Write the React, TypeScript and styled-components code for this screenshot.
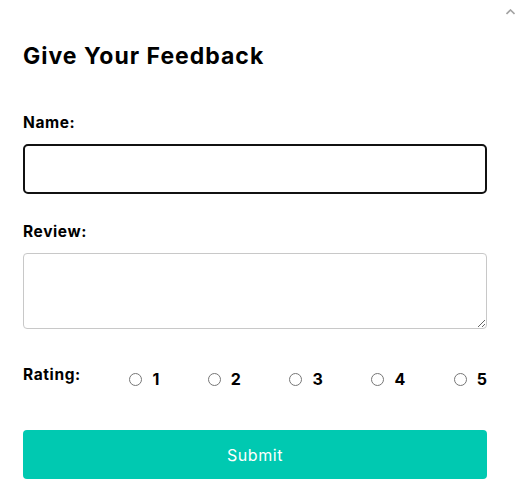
import React from 'react';
import styled, { createGlobalStyle } from 'styled-components';

const GlobalStyle = createGlobalStyle`
  html, body {
    margin: 0;
    padding: 0;
    background: #ffffff;
  }
  body {
    font-family: Inter, 'Noto Sans', sans-serif;
    color: #000000;
  }
`;

const Page = styled.div`
  position: relative;
  width: 525px;
  height: 502px;
  overflow: hidden;
`;

const ScrollArrow = styled.svg`
  position: absolute;
  top: 9px;
  right: 10px;
`;

const Form = styled.form`
  width: 464px;
  margin-left: 23px;
  padding-top: 40px;
  display: flex;
  flex-direction: column;
`;

const Title = styled.h2`
  margin: 0 0 40px;
  font-size: 23px;
  font-weight: 700;
  line-height: 32px;
  letter-spacing: 1px;
`;

const Label = styled.label`
  display: block;
  font-size: 15.5px;
  font-weight: 700;
  line-height: 22px;
  letter-spacing: 0.6px;
  margin-bottom: 10px;
`;

const Field = styled.div`
  margin-bottom: 27px;
`;

const TextInput = styled.input`
  box-sizing: border-box;
  width: 100%;
  height: 50px;
  border: 2px solid #111111;
  border-radius: 5px;
  padding: 0 12px;
  font: inherit;
  outline: none;
`;

const TextArea = styled.textarea`
  box-sizing: border-box;
  display: block;
  width: 100%;
  height: 76px;
  border: 1px solid #c8c8c8;
  border-radius: 4px;
  padding: 8px 12px;
  font: inherit;
  outline: none;
`;

const RatingRow = styled.div`
  display: flex;
  justify-content: space-between;
  align-items: flex-start;
  margin-top: 8px;
  margin-bottom: 40px;
`;

const RatingLabel = styled.span`
  font-size: 15.5px;
  font-weight: 700;
  line-height: 22px;
  letter-spacing: 0.6px;
`;

const Option = styled.label`
  display: flex;
  align-items: center;
  gap: 10px;
  margin-top: 4px;
  font-size: 16px;
  font-weight: 700;
  line-height: 22px;
`;

const Radio = styled.input`
  margin: 0;
  width: 13px;
  height: 13px;
`;

const SubmitButton = styled.button`
  height: 49px;
  border: none;
  border-radius: 4px;
  background: #00c9b1;
  color: #ffffff;
  font-family: inherit;
  font-size: 16px;
  font-weight: 400;
  letter-spacing: 0.6px;
  cursor: pointer;
`;

const ratings = [1, 2, 3, 4, 5];

export default function App() {
  return (
    <Page>
      <GlobalStyle />
      <ScrollArrow width="9" height="6" viewBox="0 0 9 6">
        <path d="M0.5 5 L4.5 1 L8.5 5" fill="none" stroke="#a3a3a3" strokeWidth="1.6" />
      </ScrollArrow>
      <Form onSubmit={(e) => e.preventDefault()}>
        <Title>Give Your Feedback</Title>
        <Field>
          <Label htmlFor="name">Name:</Label>
          <TextInput id="name" type="text" />
        </Field>
        <Field>
          <Label htmlFor="review">Review:</Label>
          <TextArea id="review" />
        </Field>
        <RatingRow>
          <RatingLabel>Rating:</RatingLabel>
          {ratings.map((r) => (
            <Option key={r}>
              <Radio type="radio" name="rating" value={r} />
              {r}
            </Option>
          ))}
        </RatingRow>
        <SubmitButton type="submit">Submit</SubmitButton>
      </Form>
    </Page>
  );
}
